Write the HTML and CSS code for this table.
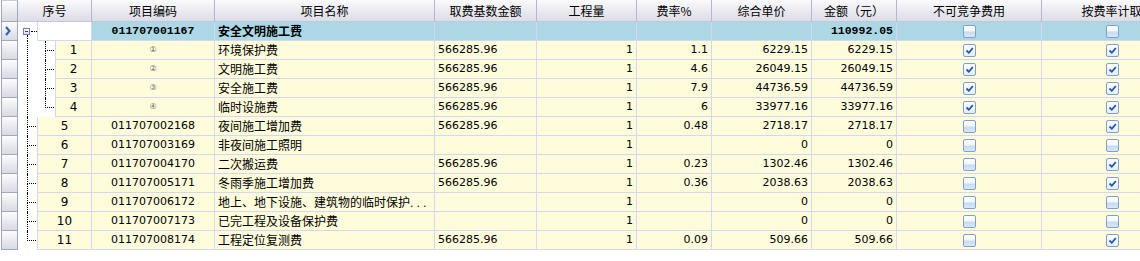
FILE: index.html
```html
<!DOCTYPE html>
<html lang="zh-CN">
<head>
<meta charset="utf-8">
<title>措施项目</title>
<link rel="stylesheet" href="styles.css">
</head>
<body>
<div class="grid">
  <div class="row head">
    <div class="c ind"><div class="btn"></div></div>
    <div class="c xh">序号</div>
    <div class="c code">项目编码</div>
    <div class="c name">项目名称</div>
    <div class="c base">取费基数金额</div>
    <div class="c qty">工程量</div>
    <div class="c rate">费率%</div>
    <div class="c unit">综合单价</div>
    <div class="c amt">金额（元）</div>
    <div class="c nc">不可竞争费用</div>
    <div class="c fr">按费率计取</div>
  </div>

  <div class="row grp">
    <div class="c ind"><div class="btn"><svg width="15" height="18" viewBox="0 0 15 18"><polyline points="4,5 7.5,9 4,13" fill="none" stroke="#2f5fb0" stroke-width="2"/></svg></div></div>
    <div class="c xh"><div class="gut g0"><div class="gtop"></div><div class="gmid"><span class="box"><span class="minus"></span></span><span class="hd"></span></div><div class="gbot"></div></div><div class="num sel"></div></div>
    <div class="c code b">011707001167</div>
    <div class="c name bz">安全文明施工费</div>
    <div class="c base"></div>
    <div class="c qty"></div>
    <div class="c rate"></div>
    <div class="c unit"></div>
    <div class="c amt b">110992.05</div>
    <div class="c nc"><span class="cb"></span></div>
    <div class="c fr"><span class="cb"></span></div>
  </div>

  <div class="row">
    <div class="c ind"><div class="btn"></div></div>
    <div class="c xh"><div class="gut g2"><span class="pass"></span><span class="conn k2"><span class="up"></span><span class="dn"></span></span></div><div class="num">1</div></div>
    <div class="c code circ">①</div>
    <div class="c name">环境保护费</div>
    <div class="c base">566285.96</div>
    <div class="c qty">1</div>
    <div class="c rate">1.1</div>
    <div class="c unit">6229.15</div>
    <div class="c amt">6229.15</div>
    <div class="c nc"><span class="cb on"><svg width="11" height="11" viewBox="0 0 11 11"><polyline points="2.5,5.5 4.8,7.8 8.8,3.2" fill="none" stroke="#2356b0" stroke-width="1.8"/></svg></span></div>
    <div class="c fr"><span class="cb on"><svg width="11" height="11" viewBox="0 0 11 11"><polyline points="2.5,5.5 4.8,7.8 8.8,3.2" fill="none" stroke="#2356b0" stroke-width="1.8"/></svg></span></div>
  </div>

  <div class="row">
    <div class="c ind"><div class="btn"></div></div>
    <div class="c xh"><div class="gut g2"><span class="pass"></span><span class="conn k2"><span class="up"></span><span class="dn"></span></span></div><div class="num">2</div></div>
    <div class="c code circ">②</div>
    <div class="c name">文明施工费</div>
    <div class="c base">566285.96</div>
    <div class="c qty">1</div>
    <div class="c rate">4.6</div>
    <div class="c unit">26049.15</div>
    <div class="c amt">26049.15</div>
    <div class="c nc"><span class="cb on"><svg width="11" height="11" viewBox="0 0 11 11"><polyline points="2.5,5.5 4.8,7.8 8.8,3.2" fill="none" stroke="#2356b0" stroke-width="1.8"/></svg></span></div>
    <div class="c fr"><span class="cb on"><svg width="11" height="11" viewBox="0 0 11 11"><polyline points="2.5,5.5 4.8,7.8 8.8,3.2" fill="none" stroke="#2356b0" stroke-width="1.8"/></svg></span></div>
  </div>

  <div class="row">
    <div class="c ind"><div class="btn"></div></div>
    <div class="c xh"><div class="gut g2"><span class="pass"></span><span class="conn k2"><span class="up"></span><span class="dn"></span></span></div><div class="num">3</div></div>
    <div class="c code circ">③</div>
    <div class="c name">安全施工费</div>
    <div class="c base">566285.96</div>
    <div class="c qty">1</div>
    <div class="c rate">7.9</div>
    <div class="c unit">44736.59</div>
    <div class="c amt">44736.59</div>
    <div class="c nc"><span class="cb on"><svg width="11" height="11" viewBox="0 0 11 11"><polyline points="2.5,5.5 4.8,7.8 8.8,3.2" fill="none" stroke="#2356b0" stroke-width="1.8"/></svg></span></div>
    <div class="c fr"><span class="cb on"><svg width="11" height="11" viewBox="0 0 11 11"><polyline points="2.5,5.5 4.8,7.8 8.8,3.2" fill="none" stroke="#2356b0" stroke-width="1.8"/></svg></span></div>
  </div>

  <div class="row">
    <div class="c ind"><div class="btn"></div></div>
    <div class="c xh"><div class="gut g2"><span class="pass"></span><span class="conn k2"><span class="up"></span><span class="dn last"></span></span></div><div class="num">4</div></div>
    <div class="c code circ">④</div>
    <div class="c name">临时设施费</div>
    <div class="c base">566285.96</div>
    <div class="c qty">1</div>
    <div class="c rate">6</div>
    <div class="c unit">33977.16</div>
    <div class="c amt">33977.16</div>
    <div class="c nc"><span class="cb on"><svg width="11" height="11" viewBox="0 0 11 11"><polyline points="2.5,5.5 4.8,7.8 8.8,3.2" fill="none" stroke="#2356b0" stroke-width="1.8"/></svg></span></div>
    <div class="c fr"><span class="cb on"><svg width="11" height="11" viewBox="0 0 11 11"><polyline points="2.5,5.5 4.8,7.8 8.8,3.2" fill="none" stroke="#2356b0" stroke-width="1.8"/></svg></span></div>
  </div>

  <div class="row">
    <div class="c ind"><div class="btn"></div></div>
    <div class="c xh"><div class="gut g1"><span class="conn k1"><span class="up"></span><span class="dn"></span></span></div><div class="num">5</div></div>
    <div class="c code">011707002168</div>
    <div class="c name">夜间施工增加费</div>
    <div class="c base">566285.96</div>
    <div class="c qty">1</div>
    <div class="c rate">0.48</div>
    <div class="c unit">2718.17</div>
    <div class="c amt">2718.17</div>
    <div class="c nc"><span class="cb"></span></div>
    <div class="c fr"><span class="cb on"><svg width="11" height="11" viewBox="0 0 11 11"><polyline points="2.5,5.5 4.8,7.8 8.8,3.2" fill="none" stroke="#2356b0" stroke-width="1.8"/></svg></span></div>
  </div>

  <div class="row">
    <div class="c ind"><div class="btn"></div></div>
    <div class="c xh"><div class="gut g1"><span class="conn k1"><span class="up"></span><span class="dn"></span></span></div><div class="num">6</div></div>
    <div class="c code">011707003169</div>
    <div class="c name">非夜间施工照明</div>
    <div class="c base"></div>
    <div class="c qty">1</div>
    <div class="c rate"></div>
    <div class="c unit">0</div>
    <div class="c amt">0</div>
    <div class="c nc"><span class="cb"></span></div>
    <div class="c fr"><span class="cb"></span></div>
  </div>

  <div class="row">
    <div class="c ind"><div class="btn"></div></div>
    <div class="c xh"><div class="gut g1"><span class="conn k1"><span class="up"></span><span class="dn"></span></span></div><div class="num">7</div></div>
    <div class="c code">011707004170</div>
    <div class="c name">二次搬运费</div>
    <div class="c base">566285.96</div>
    <div class="c qty">1</div>
    <div class="c rate">0.23</div>
    <div class="c unit">1302.46</div>
    <div class="c amt">1302.46</div>
    <div class="c nc"><span class="cb"></span></div>
    <div class="c fr"><span class="cb on"><svg width="11" height="11" viewBox="0 0 11 11"><polyline points="2.5,5.5 4.8,7.8 8.8,3.2" fill="none" stroke="#2356b0" stroke-width="1.8"/></svg></span></div>
  </div>

  <div class="row">
    <div class="c ind"><div class="btn"></div></div>
    <div class="c xh"><div class="gut g1"><span class="conn k1"><span class="up"></span><span class="dn"></span></span></div><div class="num">8</div></div>
    <div class="c code">011707005171</div>
    <div class="c name">冬雨季施工增加费</div>
    <div class="c base">566285.96</div>
    <div class="c qty">1</div>
    <div class="c rate">0.36</div>
    <div class="c unit">2038.63</div>
    <div class="c amt">2038.63</div>
    <div class="c nc"><span class="cb"></span></div>
    <div class="c fr"><span class="cb on"><svg width="11" height="11" viewBox="0 0 11 11"><polyline points="2.5,5.5 4.8,7.8 8.8,3.2" fill="none" stroke="#2356b0" stroke-width="1.8"/></svg></span></div>
  </div>

  <div class="row">
    <div class="c ind"><div class="btn"></div></div>
    <div class="c xh"><div class="gut g1"><span class="conn k1"><span class="up"></span><span class="dn"></span></span></div><div class="num">9</div></div>
    <div class="c code">011707006172</div>
    <div class="c name">地上、地下设施、建筑物的临时保护<span class="dots">...</span></div>
    <div class="c base"></div>
    <div class="c qty">1</div>
    <div class="c rate"></div>
    <div class="c unit">0</div>
    <div class="c amt">0</div>
    <div class="c nc"><span class="cb"></span></div>
    <div class="c fr"><span class="cb"></span></div>
  </div>

  <div class="row">
    <div class="c ind"><div class="btn"></div></div>
    <div class="c xh"><div class="gut g1"><span class="conn k1"><span class="up"></span><span class="dn"></span></span></div><div class="num">10</div></div>
    <div class="c code">011707007173</div>
    <div class="c name">已完工程及设备保护费</div>
    <div class="c base"></div>
    <div class="c qty">1</div>
    <div class="c rate"></div>
    <div class="c unit">0</div>
    <div class="c amt">0</div>
    <div class="c nc"><span class="cb"></span></div>
    <div class="c fr"><span class="cb"></span></div>
  </div>

  <div class="row">
    <div class="c ind"><div class="btn"></div></div>
    <div class="c xh"><div class="gut g1"><span class="conn k1"><span class="up"></span><span class="dn last"></span></span></div><div class="num">11</div></div>
    <div class="c code">011707008174</div>
    <div class="c name">工程定位复测费</div>
    <div class="c base">566285.96</div>
    <div class="c qty">1</div>
    <div class="c rate">0.09</div>
    <div class="c unit">509.66</div>
    <div class="c amt">509.66</div>
    <div class="c nc"><span class="cb"></span></div>
    <div class="c fr"><span class="cb on"><svg width="11" height="11" viewBox="0 0 11 11"><polyline points="2.5,5.5 4.8,7.8 8.8,3.2" fill="none" stroke="#2356b0" stroke-width="1.8"/></svg></span></div>
  </div>
</div>
</body>
</html>
```

FILE: styles.css
```css
html, body {
  margin: 0;
  padding: 0;
  background: #fff;
  overflow: hidden;
}

.grid {
  width: 1182px;
  font-family: "DejaVu Sans", "Noto Sans CJK SC", sans-serif;
  font-size: 11px;
  color: #000;
}

.row {
  display: flex;
  height: 19px;
}

.c {
  box-sizing: border-box;
  flex: none;
  height: 19px;
  line-height: 18px;
  border-right: 1px solid #d3d8f1;
  border-bottom: 1px solid #d3d8f1;
  background: #fffcdc;
  white-space: nowrap;
  overflow: hidden;
}

/* column widths */
.ind  { width: 18px; }
.xh   { width: 74px; }
.code { width: 123px; text-align: center; }
.name { width: 220px; padding-left: 3px; font-family: "Noto Sans CJK SC", sans-serif; font-size: 12px; }
.base { width: 102px; padding-left: 3px; }
.qty  { width: 100px; text-align: right; padding-right: 3px; }
.rate { width: 75px;  text-align: right; padding-right: 3px; }
.unit { width: 100px; text-align: right; padding-right: 3px; }
.amt  { width: 85px;  text-align: right; padding-right: 3px; }
.nc   { width: 145px; display: flex; justify-content: center; align-items: center; }
.fr   { width: 140px; display: flex; justify-content: center; align-items: center; border-right: none; }

/* header */
.head {
  height: 22px;
}
.head .c {
  height: 22px;
  line-height: 21px;
  text-align: center;
  padding: 0;
  font-family: "Noto Sans CJK SC", sans-serif;
  font-size: 12px;
  background: linear-gradient(#fbfbfd, #e9e9ef 55%, #dcdde6);
  border-right: 1px solid #b2b6ce;
  border-bottom: 1px solid #c3c7dc;
  display: block;
}
.head .ind {
  background: #fff;
  border: none;
}

/* indicator column */
.c.ind {
  background: #fff;
  border: none;
  padding-left: 1px;
}
.btn {
  box-sizing: border-box;
  width: 17px;
  height: 19px;
  border: 1px solid #a1a5c6;
  border-top: none;
  background: linear-gradient(#fdfdfe, #e6e6ee 60%, #d9dae4);
}
.head .btn {
  height: 22px;
  border-top: 1px solid #c9cce0;
}
.btn svg { display: block; }

/* tree column */
.row:not(.head) .xh {
  display: flex;
  border-bottom: none;
  background: #fff;
}
.gut {
  flex: none;
  display: flex;
  height: 19px;
}
.g0 { width: 19px; flex-direction: column; }
.g1 { width: 19px; }
.g2 { width: 37px; }
.gtop { height: 6px; }
.gmid { display: flex; align-items: center; height: 7px; }
.gbot { flex: 1; margin-left: 9px; border-left: 1px dotted #000; }
.box {
  box-sizing: border-box;
  margin-left: 5px;
  width: 7px;
  height: 7px;
  border: 1px solid #6c7db6;
  background: linear-gradient(#fff, #d8dff2);
  display: flex;
  align-items: center;
  justify-content: center;
}
.minus { width: 3px; height: 1px; background: #2c3f86; }
.hd {
  width: 6px;
  margin-left: 1px;
  border-top: 1px dotted #000;
}
.pass {
  margin-left: 9px;
  width: 0;
  border-left: 1px dotted #000;
}
.conn {
  display: flex;
  flex-direction: column;
  width: 9px;
}
.k1 { margin-left: 9px; }
.k2 { margin-left: 17px; }
.up {
  box-sizing: border-box;
  height: 10px;
  border-left: 1px dotted #000;
  border-bottom: 1px dotted #000;
}
.dn {
  flex: 1;
  border-left: 1px dotted #000;
}
.dn.last { border-left: none; }

.num {
  flex: 1;
  box-sizing: border-box;
  border-left: 1px solid #d3d8f1;
  border-bottom: 1px solid #d3d8f1;
  background: #fffcdc;
  text-align: center;
  font-size: 12px;
}
.num.sel { background: #fff; }

/* group row */
.grp .c:not(.ind):not(.xh) { background: #acd8e6; }
.b {
  font-family: "Liberation Mono", monospace;
  font-weight: bold;
  font-size: 11.5px;
}
.bz { font-weight: bold; }

.circ {
  font-size: 8px;
  color: #6a6a6a;
  font-family: "DejaVu Sans", sans-serif;
}

.dots {
  font-family: "DejaVu Sans", sans-serif;
  font-size: 11px;
  letter-spacing: 3px;
}

/* checkboxes */
.cb {
  box-sizing: border-box;
  width: 13px;
  height: 13px;
  border: 1px solid #7f9fcf;
  border-radius: 2px;
  background: linear-gradient(#ffffff 0%, #f2f7fd 45%, #c6dbf2 55%, #d9e8f8 100%);
  display: flex;
  align-items: center;
  justify-content: center;
}
.cb.on {
  background: linear-gradient(#ffffff, #e4eefa);
}
.cb svg { display: block; }
```
